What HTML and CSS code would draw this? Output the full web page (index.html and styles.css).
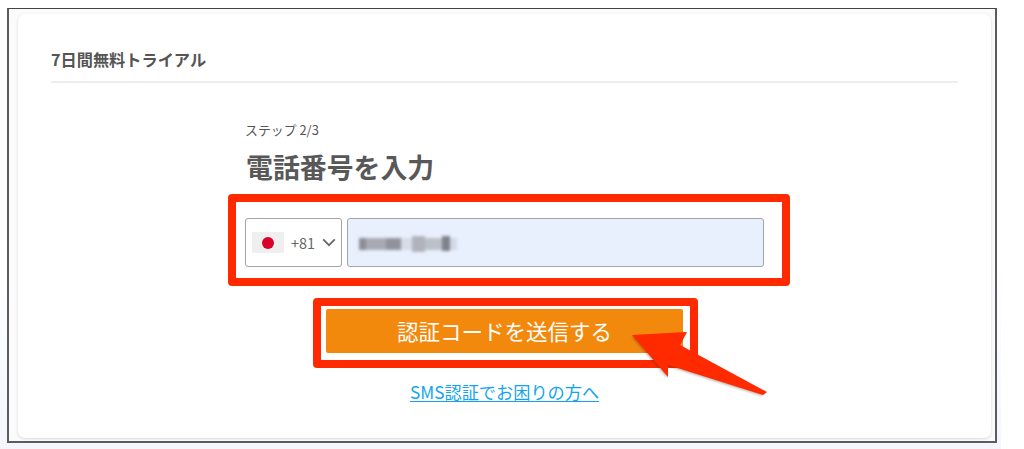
FILE: index.html
```html
<!DOCTYPE html>
<html lang="ja">
<head>
<meta charset="utf-8">
<title>7日間無料トライアル</title>
<link rel="stylesheet" href="styles.css">
</head>
<body>
<div class="page">
  <div class="frame">
    <main class="card">
      <h2 class="card-title">7日間無料トライアル</h2>
      <section class="form">
        <p class="step">ステップ 2/3</p>
        <h1 class="heading">電話番号を入力</h1>
        <div class="phone-row">
          <div class="country">
            <span class="flag"><span class="sun"></span></span>
            <span class="code">+81</span>
            <svg class="chevron" width="14" height="9" viewBox="0 0 14 9"><path d="M1.2 1.4 7 7.2l5.8-5.8" fill="none" stroke="#666" stroke-width="1.7"/></svg>
          </div>
          <div class="phone-input">
            <div class="mosaic">
              <span class="m1"></span><span class="m2"></span><span class="m3"></span><span class="m4"></span><span class="m5"></span><span class="m6"></span><span class="m7"></span><span class="m8"></span>
            </div>
          </div>
        </div>
        <button class="submit" type="button">認証コードを送信する</button>
        <a class="help" href="#">SMS認証でお困りの方へ</a>
      </section>
    </main>
  </div>
  <div class="mark mark-phone"></div>
  <div class="mark mark-button"></div>
  <svg class="arrow" width="150" height="80" viewBox="0 0 150 80">
    <path class="arrow-shadow" d="M2 23 56 19 49 32 135 78 132 82 37 52 37 64Z"/>
    <path class="arrow-head" d="M2 21 57 18 50 31 137 78 133 81 38 51 38 63Z"/>
  </svg>
</div>
</body>
</html>
```
FILE: styles.css
```css
* { box-sizing: border-box; }
html, body { margin: 0; padding: 0; background: #fff; }
body { width: 1024px; height: 449px; overflow: hidden; font-family: "Noto Sans CJK JP", "Noto Sans", sans-serif; color: #555; }
.page { position: relative; width: 1001px; height: 449px; padding: 8px 4px 0 7px; background: linear-gradient(#fff 55%, #f4f6fb); }
.frame { width: 990px; height: 435px; border: 1px solid #444; border-left: 2px solid #5c5c60; border-right: 2px solid #5c5c60; border-bottom: 2px solid #5c5c60; padding: 5px 4px 3px 9px; background: #fbfbfc; }
.card { height: 424px; width: 973px; background: #fff; border-radius: 7px; box-shadow: 0 1px 3px rgba(0,0,0,.14); padding: 0 33px; }
.card-title { margin: 0; height: 69px; padding-top: 34px; font-size: 16.2px; line-height: 22px; font-weight: 700; color: #555; border-bottom: 2px solid #eee; }
.form { display: flex; flex-direction: column; align-items: flex-start; padding-left: 194px; }
.step { margin: 38px 0 0; font-size: 12.9px; line-height: 18px; color: #555; }
.heading { margin: 10px 0 0 1px; font-size: 26.9px; line-height: 36px; font-weight: 700; color: #585858; }
.phone-row { display: flex; gap: 5px; margin-top: 33px; height: 49px; }
.country { width: 97px; display: flex; align-items: center; padding-left: 6px; background: #fff; border: 1px solid #a3a3a8; border-radius: 3px; }
.flag { width: 32px; height: 21px; background: #efefef; display: flex; align-items: center; justify-content: center; }
.sun { width: 12px; height: 12px; border-radius: 50%; background: #d9002a; }
.code { margin-left: 7px; font-size: 14.4px; color: #666; }
.chevron { margin-left: 7px; }
.phone-input { width: 417px; background: #e8f0fd; border: 1px solid #a3a3a8; border-radius: 3px; padding: 15px 0 0 11px; }
.mosaic { display: flex; align-items: center; width: 98px; height: 19px; filter: blur(1.7px); }
.mosaic span { display: block; height: 12px; }
.m1 { width: 7px; background: #8b8e97; }
.m2 { width: 20px; background: #a7aab3; }
.m3 { width: 15px; background: #90939c; }
.m4 { width: 11px; background: #d6dce8; }
.m5 { width: 13px; height: 16px !important; background: #b0b3bc; }
.m6 { width: 17px; background: #bcc0c9; }
.m7 { width: 8px; height: 15px !important; background: #7f828b; }
.m8 { width: 7px; background: #d3d9e5; }
.submit { margin: 42px 0 0 81px; width: 357px; height: 44px; border: 0; border-radius: 2px; background: #f2890c; color: #fff; font: 400 21.5px/44px "Noto Sans CJK JP", sans-serif; padding: 0; }
.help { margin: 28px 0 0 165px; font-size: 17.2px; line-height: 22px; color: #12a5ee; text-decoration: underline; text-underline-offset: 2px; }
.mark { position: absolute; border: 8px solid #ff2a00; border-radius: 4px; }
.mark-phone { left: 228px; top: 194px; width: 562px; height: 92px; }
.mark-button { left: 313px; top: 298px; width: 385px; height: 70px; }
.arrow { position: absolute; left: 630px; top: 314px; overflow: visible; }
.arrow-head { fill: #ff2a00; }
.arrow-shadow { fill: rgba(60,40,20,.35); filter: blur(1px); }
```
